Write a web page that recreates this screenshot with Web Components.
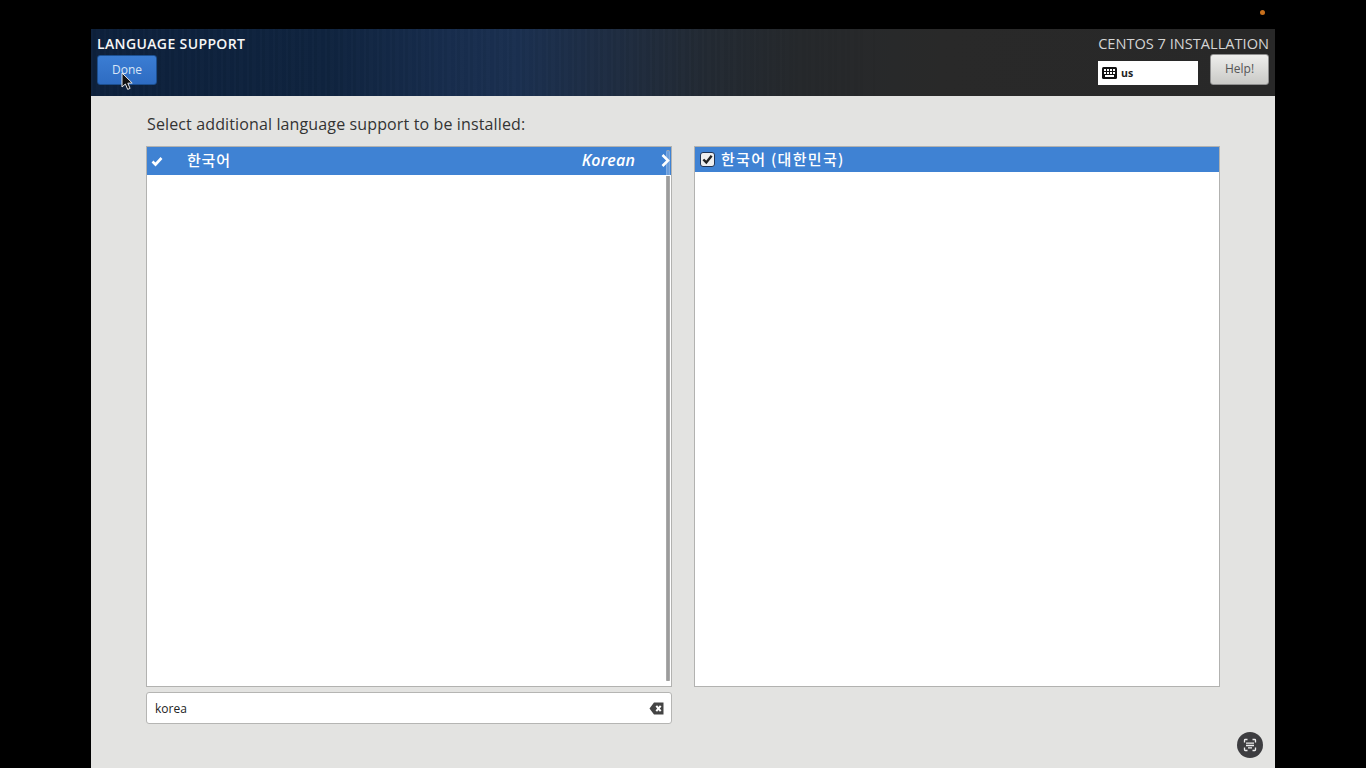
<!DOCTYPE html>
<html><head><meta charset="utf-8">
<style>html,body{margin:0;padding:0;background:#000;height:100%;overflow:hidden}</style>
</head><body>
<cs-installer>
  <cs-header slot="header" title-text="LANGUAGE SUPPORT" product="CENTOS 7 INSTALLATION" layout="us"></cs-header>
  <cs-spoke heading="Select additional language support to be installed:"></cs-spoke>
</cs-installer>
<script>
const KO='"Noto Sans CJK KR","Open Sans",sans-serif';
const UI='"Open Sans","Noto Sans",sans-serif';
function def(name,html){
  customElements.define(name,class extends HTMLElement{
    connectedCallback(){
      if(this.shadowRoot)return;
      const r=this.attachShadow({mode:'open'});
      r.innerHTML=typeof html==='function'?html(this):html;
    }
  });
}
def('cs-installer',`<style>
:host{display:block;width:1366px;height:768px;background:#000;font-family:${UI}}
.top{height:29px;display:flex;justify-content:flex-end;align-items:flex-start;padding-right:101px;box-sizing:border-box;padding-top:10px;width:1366px}
.dot{width:5px;height:5px;border-radius:50%;background:#c8701c}
.win{margin-left:91px;width:1184px;height:739px;display:flex;flex-direction:column;background:#e3e3e1;position:relative}
</style>
<div class="top"><div class="dot"></div></div>
<div class="win"><slot name="header"></slot><slot></slot></div>`);
def('cs-header',h=>`<style>
:host{display:block;height:67px;color:#fff;position:relative;
background:linear-gradient(90deg,#0e213c 0,#10243f 20%,#182d4d 30%,#1b3050 36%,#1f2d42 44%,#232a33 52%,#26292c 60%,#292929 72%,#282828 100%);}
.tex{position:absolute;inset:0;
background:repeating-linear-gradient(90deg,rgba(255,255,255,.01) 0 2px,rgba(0,0,0,.018) 2px 5px,rgba(255,255,255,.006) 5px 9px,rgba(0,0,0,.012) 9px 13px);
-webkit-mask-image:linear-gradient(90deg,#000 0,#000 50%,transparent 68%);mask-image:linear-gradient(90deg,#000 0,#000 50%,transparent 68%)}
.bar{position:relative;display:flex;justify-content:space-between;height:100%;padding:0 6px;box-sizing:border-box}
.l{display:flex;flex-direction:column;align-items:flex-start;position:relative}
.t{font:600 14px/15px ${UI};margin-top:7px;letter-spacing:.37px;color:#f6f6f6;white-space:nowrap}
.done{position:relative;margin-top:4px;width:60px;height:30px;box-sizing:border-box;border:1px solid #1c4f8f;border-radius:3px;background:linear-gradient(#3b7dd3,#2e6cc2);color:#d8e6f7;font:400 12px/27px ${UI};text-align:center}
.cur{position:absolute;left:23px;top:16px}
.r{display:flex;flex-direction:column;align-items:flex-end}
.p{font:400 14.6px/15px ${UI};margin-top:7px;color:#d4d4d4;white-space:nowrap}
.row{display:flex;gap:12px;align-items:flex-end;margin-top:3px}
.kb{width:100px;height:24px;background:#fff;display:flex;align-items:center;gap:4px;padding-left:4px;box-sizing:border-box;color:#222;font:700 10.5px ${UI}}
.help{width:59px;height:31px;box-sizing:border-box;border:1px solid #8f8f8f;border-radius:3px;background:linear-gradient(#eeeeec,#c9c9c6);color:#555;font:400 12px/27px ${UI};text-align:center}
</style>
<div class="tex"></div>
<div class="bar">
<div class="l"><div class="t">${h.getAttribute('title-text')}</div>
<div class="done">Done<svg class="cur" width="13" height="19" viewBox="0 0 13 19"><path d="M1 1v14l3.4-3 2.3 5.4 2.4-1-2.3-5.2 4.4-.2z" fill="#111" stroke="#e8e8e8" stroke-width="1"/></svg></div></div>
<div class="r"><div class="p">${h.getAttribute('product')}</div>
<div class="row"><div class="kb"><svg width="15" height="12" viewBox="0 0 15 12"><rect width="15" height="12" rx="1.5" fill="#111"/><g fill="#fff"><rect x="2" y="2" width="2" height="2"/><rect x="5" y="2" width="2" height="2"/><rect x="8" y="2" width="2" height="2"/><rect x="11" y="2" width="2" height="2"/><rect x="2" y="5" width="2" height="2"/><rect x="5" y="5" width="2" height="2"/><rect x="8" y="5" width="2" height="2"/><rect x="11" y="5" width="2" height="2"/><rect x="3" y="8" width="9" height="2"/></g></svg><span>${h.getAttribute('layout')}</span></div>
<div class="help">Help!</div></div></div>
</div>`);
def('cs-spoke',h=>`<style>
:host{display:block;flex:1;position:relative;color:#2e3436}
.wrap{padding:0 55px}
h2{margin:0;font:400 16px/20px ${UI};height:50px;padding:18px 0 0 1px;box-sizing:border-box;letter-spacing:.13px;color:#333;white-space:nowrap}
.grid{display:grid;grid-template-columns:526px 526px;column-gap:22px;}
.shot{position:absolute;right:12px;bottom:10px;width:26px;height:26px}
</style>
<div class="wrap"><h2>${h.getAttribute('heading')}</h2>
<div class="grid">
<cs-list scrollbar><cs-lang-row></cs-lang-row></cs-list>
<cs-list><cs-locale-row></cs-locale-row></cs-list>
<cs-search value="korea"></cs-search>
</div></div>
<svg class="shot" viewBox="0 0 26 26"><circle cx="13" cy="13" r="13" fill="#3d3d40"/><g fill="none" stroke="#eee" stroke-width="1.3"><path d="M7.5 10.5V8.2q0-.7.7-.7h2.3M15.5 7.5h2.3q.7 0 .7.7v2.3M18.5 15.5v2.3q0 .7-.7.7h-2.3M10.5 18.5H8.2q-.7 0-.7-.7v-2.3"/><path d="M9 11.2h8M9 13.5h8M11 15.8h4"/></g></svg>`);
def('cs-list',h=>`<style>
:host{display:block;height:541px;box-sizing:border-box;background:#fff;border:1px solid #b2b2b0;position:relative}
.sb{position:absolute;right:1px;top:3px;bottom:4px;width:4px;box-sizing:border-box;border-radius:2px;background:linear-gradient(rgba(255,255,255,.22) 0 25px,#9c9c9c 25px);border:1px solid rgba(255,255,255,.15)}
</style><slot></slot>${h.hasAttribute('scrollbar')?'<div class="sb"></div>':''}`);
def('cs-lang-row',`<style>
:host{display:flex;align-items:center;height:28px;background:#3f82d3;color:#fff;position:relative;font:15px ${KO}}
.chk{margin-left:4px;width:12px;height:12px}
.n{margin-left:24px;font:500 15px/20px ${KO};letter-spacing:.8px;margin-top:-2px}
.e{margin-left:auto;font:italic 600 16px/20px ${UI};letter-spacing:.15px;margin-right:36px;margin-top:-3px}
.a{position:absolute;right:1px;top:7px}
</style>
<svg class="chk" viewBox="0 0 12 12"><path d="M1.5 6.5L4.5 9.5L10.5 3" fill="none" stroke="#fff" stroke-width="2.6"/></svg>
<span class="n">한국어</span><span class="e">Korean</span>
<svg class="a" width="9" height="13" viewBox="0 0 9 13"><path d="M1.5 1L7 6.5L1.5 12" fill="none" stroke="#fff" stroke-width="2.6"/></svg>`);
def('cs-locale-row',`<style>
:host{display:flex;align-items:center;height:25px;background:#3f82d3;color:#fff}
.box{margin-left:5px;width:15px;height:15px;box-sizing:border-box;border:1px solid #1f3354;border-radius:3px;background:#eeeeee;display:flex;align-items:center;justify-content:center;margin-top:-1px}
.n{margin-left:6px;font:500 15px/20px ${KO};letter-spacing:1.3px;margin-top:-2px}
</style>
<span class="box"><svg viewBox="0 0 12 12" width="11" height="11"><path d="M1.5 6l3.2 3.2L10.5 2" fill="none" stroke="#222" stroke-width="2.6"/></svg></span>
<span class="n">한국어 (대한민국)</span>`);
def('cs-search',h=>`<style>
:host{display:flex;align-items:center;margin-top:5px;height:32px;box-sizing:border-box;background:#fff;border:1px solid #b5b5b3;border-radius:3px;padding:0 7px 0 8px;color:#222;font:12px ${UI}}
span{flex:1}
</style><span>${h.getAttribute('value')}</span>
<svg width="15" height="13" viewBox="0 0 15 13"><path d="M5 .5H14.5V12.5H5L.5 6.5z" fill="#444"/><path d="M7.3 3.8l4.4 5.4M11.7 3.8l-4.4 5.4" stroke="#fff" stroke-width="2"/></svg>`);
</script>
</body></html>
